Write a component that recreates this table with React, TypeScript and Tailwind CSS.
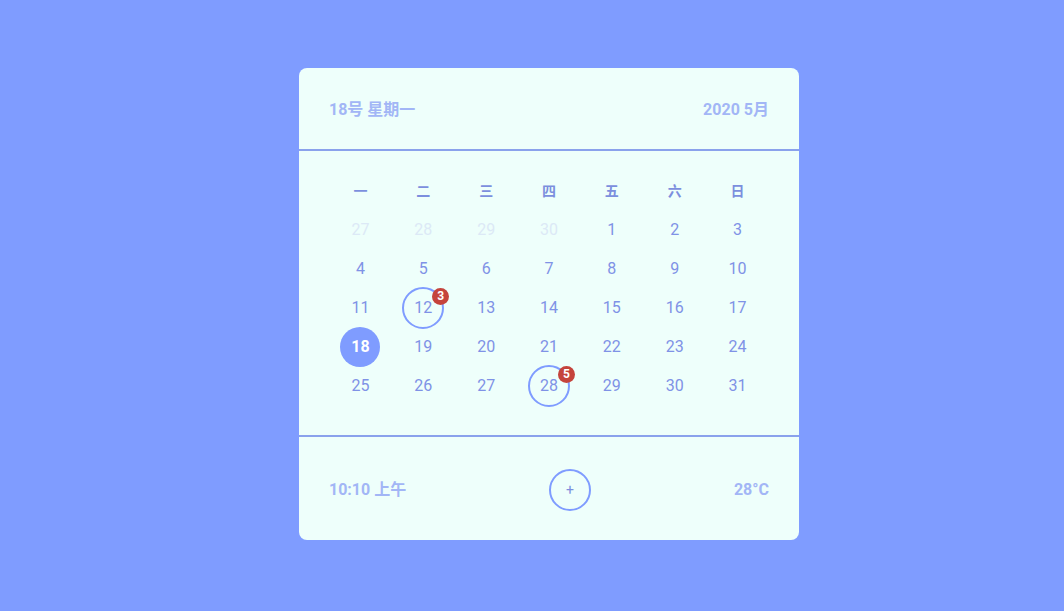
import React from "react";

const weekDays = ["一", "二", "三", "四", "五", "六", "日"];

type Day = { n: number; muted?: boolean; today?: boolean; events?: number };

const days: Day[] = [
  { n: 27, muted: true },
  { n: 28, muted: true },
  { n: 29, muted: true },
  { n: 30, muted: true },
  ...Array.from({ length: 31 }, (_, i) => ({ n: i + 1 } as Day)),
].map((d) => {
  if (d.muted) return d;
  if (d.n === 18) return { ...d, today: true };
  if (d.n === 12) return { ...d, events: 3 };
  if (d.n === 28) return { ...d, events: 5 };
  return d;
});

const DayCell = ({ day }: { day: Day }) => {
  if (day.today) {
    return (
      <div className="flex h-[39px] items-center justify-center">
        <div className="flex h-10 w-10 items-center justify-center rounded-full bg-[#7f9cff] text-base font-bold text-white">
          {day.n}
        </div>
      </div>
    );
  }
  if (day.events) {
    return (
      <div className="flex h-[39px] items-center justify-center">
        <div className="relative flex h-[42px] w-[42px] items-center justify-center rounded-full border-2 border-[#7f9cff] text-base text-[#7f92e6]">
          {day.n}
          <span className="absolute -right-[7px] -top-[1px] flex h-[17px] w-[17px] items-center justify-center rounded-full bg-[#c5443c] text-[12px] font-bold leading-none text-white">
            {day.events}
          </span>
        </div>
      </div>
    );
  }
  return (
    <div
      className={`flex h-[39px] items-center justify-center text-base ${
        day.muted ? "text-[#dce9f6]" : "text-[#7f92e6]"
      }`}
    >
      {day.n}
    </div>
  );
};

export default function App() {
  return (
    <div
      className="flex min-h-[611px] w-full items-start justify-center bg-[#7f9cff] pl-[34px] pt-[68px]"
      style={{ fontFamily: 'Roboto, "Noto Sans CJK SC", sans-serif' }}
    >
      <div className="w-[500px] overflow-hidden rounded-[8px] bg-[#eefffb]">
        {/* header */}
        <div className="flex h-[81px] items-center justify-between px-[30px] pt-[2px] text-base font-bold text-[#a2b6f6]">
          <span>18号 星期一</span>
          <span>2020 5月</span>
        </div>
        <div className="h-[2px] bg-[#8aa2ec]" />

        {/* calendar */}
        <div className="px-[30px] pb-[30px] pt-[20px]">
          <div className="grid grid-cols-7">
            {weekDays.map((w) => (
              <div
                key={w}
                className="flex h-[39px] items-center justify-center text-sm font-semibold text-[#7c8fde]"
              >
                {w}
              </div>
            ))}
            {days.map((d, i) => (
              <DayCell key={i} day={d} />
            ))}
          </div>
        </div>
        <div className="h-[2px] bg-[#8aa2ec]" />

        {/* footer */}
        <div className="flex h-[103px] items-center justify-between px-[30px] pt-[2px] text-base font-bold text-[#a2b6f6]">
          <span>10:10 上午</span>
          <button className="flex h-[42px] w-[42px] items-center justify-center rounded-full border-2 border-[#7f9cff] text-sm font-normal text-[#7c8fde]">
            +
          </button>
          <span>28°C</span>
        </div>
      </div>
    </div>
  );
}
